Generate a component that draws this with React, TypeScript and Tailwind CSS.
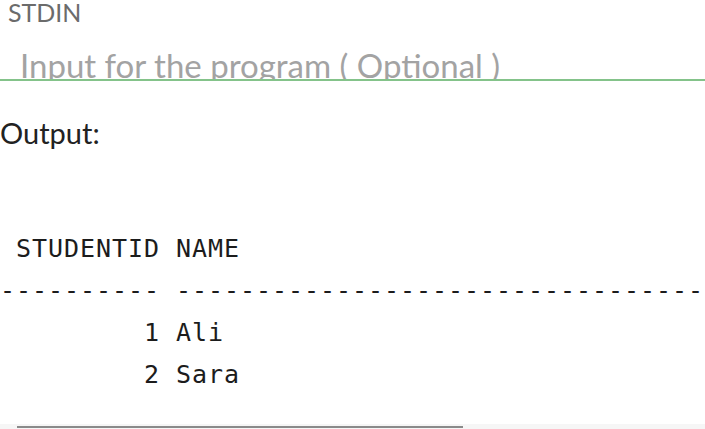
import React from "react";

const lines = [
  " STUDENTID NAME",
  "---------- " + "-".repeat(50),
  "         1 Ali",
  "         2 Sara",
];

export default function App() {
  return (
    <div className="w-[705px] h-[429px] overflow-hidden bg-white flex flex-col">
      <div
        className="h-[36px] pl-[8px] pt-0 text-[25px] leading-[25px] text-[#6b6b6b]"
        style={{ fontFamily: "Lato, sans-serif" }}
      >
        STDIN
      </div>
      <div className="h-[45px] border-b-2 border-[#84c38a] overflow-hidden pt-[13px] pl-[20px]">
        <div
          className="text-[33px] leading-[33px] text-[#a3a3a3] whitespace-nowrap"
          style={{ fontFamily: "Lato, sans-serif" }}
        >
          Input for the program ( Optional )
        </div>
      </div>
      <div
        className="mt-[37px] text-[29px] leading-[29px] text-[#222222]"
        style={{ fontFamily: "Lato, sans-serif" }}
      >
        Output:
      </div>
      <div className="mt-[81px] overflow-hidden">
        <pre
          className="m-0 text-[25px] leading-[42px] tracking-[0.95px] text-[#1c1c1c] whitespace-pre"
          style={{ fontFamily: "'DejaVu Sans Mono', monospace" }}
        >
          {lines.join("\n")}
        </pre>
      </div>
      <div className="mt-[28px] h-[5px] bg-[#f6f6f6] flex items-end pl-[17px] pb-[1px]">
        <div className="w-[446px] h-[2px] bg-[#8a8a8a]" />
      </div>
    </div>
  );
}
